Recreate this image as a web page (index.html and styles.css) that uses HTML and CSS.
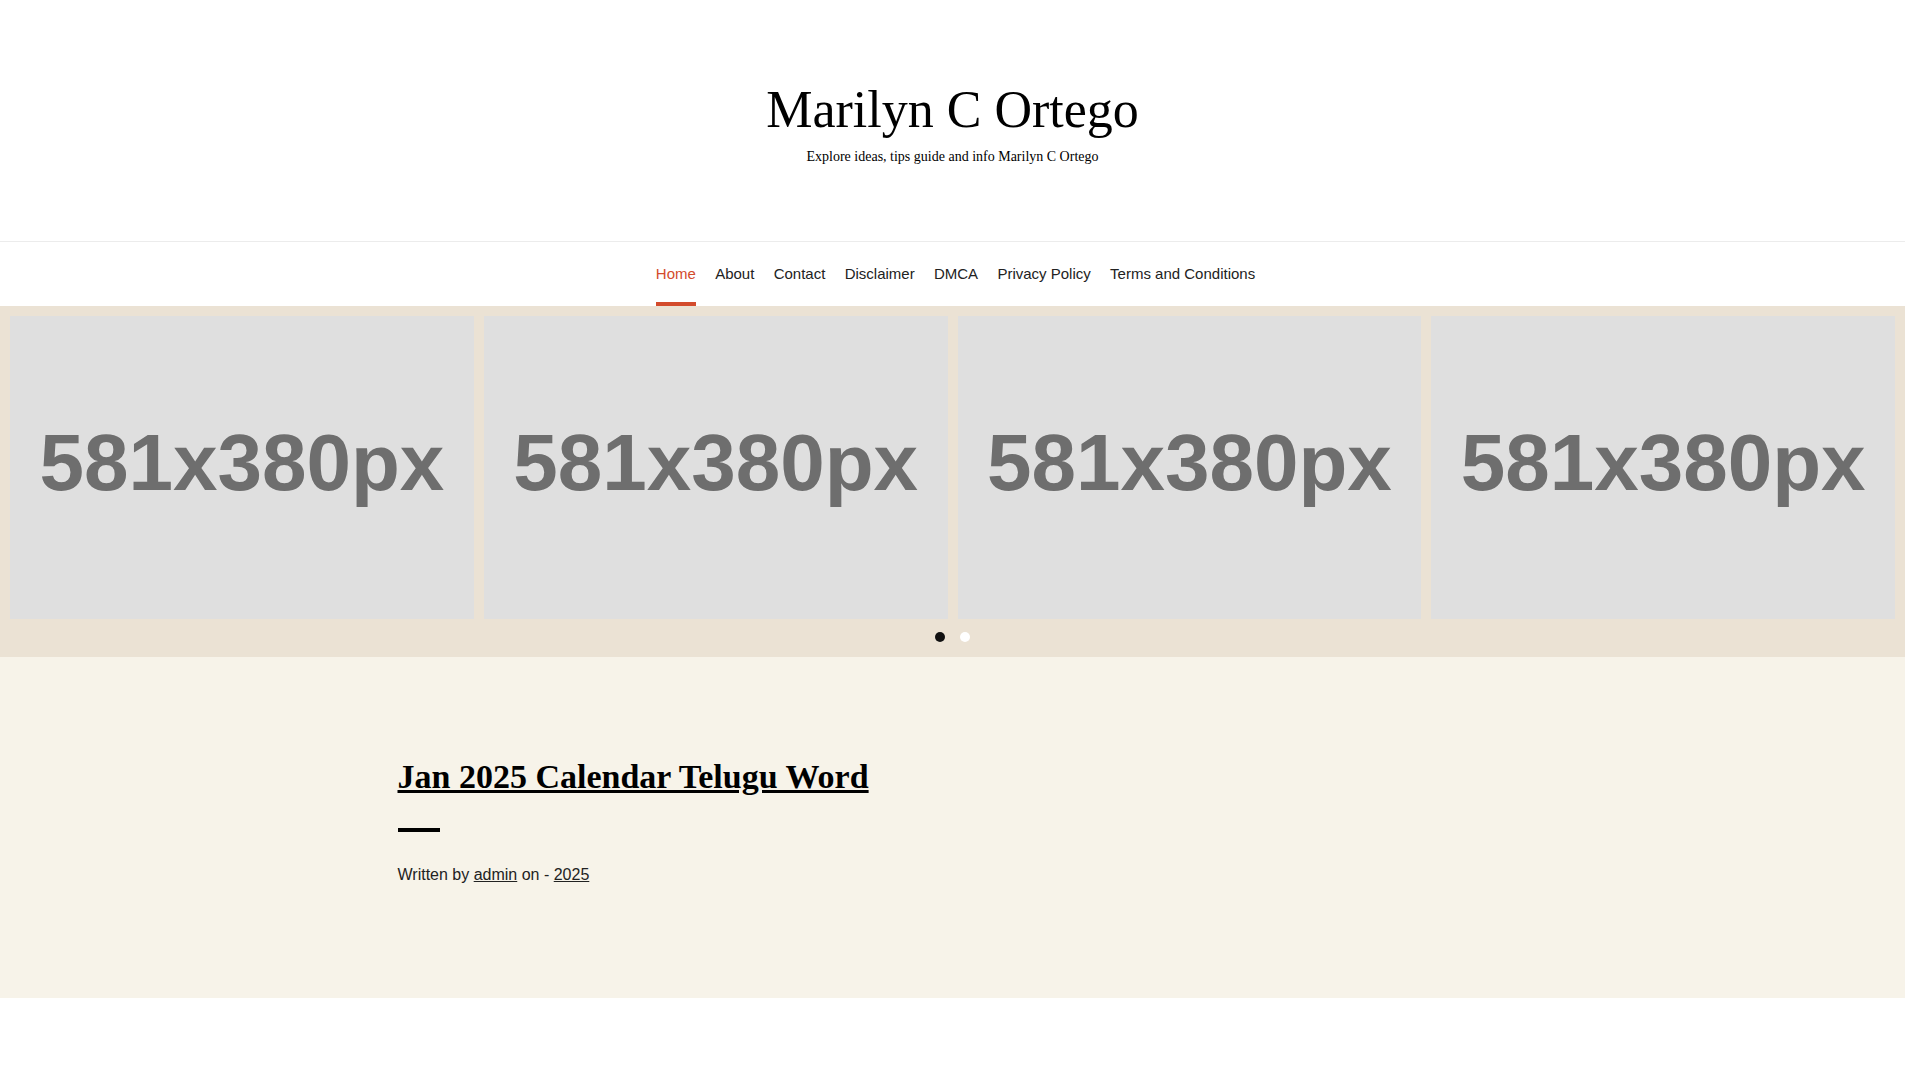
FILE: index.html
```html
<!DOCTYPE html>
<html lang="en">
<head>
<meta charset="utf-8">
<title>Marilyn C Ortego</title>
<link rel="stylesheet" href="styles.css">
</head>
<body>
<div class="page">
<header class="site-header">
  <h1 class="site-title">Marilyn C Ortego</h1>
  <p class="site-tagline">Explore ideas, tips guide and info Marilyn C Ortego</p>
</header>
<nav class="main-nav">
  <ul class="menu">
    <li><a class="menu-link active" href="#">Home</a></li>
    <li><a class="menu-link" href="#">About</a></li>
    <li><a class="menu-link" href="#">Contact</a></li>
    <li><a class="menu-link" href="#">Disclaimer</a></li>
    <li><a class="menu-link" href="#">DMCA</a></li>
    <li><a class="menu-link" href="#">Privacy Policy</a></li>
    <li><a class="menu-link" href="#">Terms and Conditions</a></li>
  </ul>
</nav>
<section class="slider">
  <div class="slides">
    <div class="slide"><span>581x380px</span></div>
    <div class="slide"><span>581x380px</span></div>
    <div class="slide"><span>581x380px</span></div>
    <div class="slide"><span>581x380px</span></div>
  </div>
  <div class="dots">
    <span class="dot active"></span>
    <span class="dot"></span>
  </div>
</section>
<section class="post-head">
  <div class="container">
    <h2 class="post-title"><a href="#">Jan 2025 Calendar Telugu Word</a></h2>
    <div class="title-bar"></div>
    <p class="post-meta">Written by <a href="#">admin</a> on - <a href="#">2025</a></p>
  </div>
</section>
<section class="post-body"></section>
</div>
</body>
</html>
```

FILE: styles.css
```css
html {
  overflow-y: scroll;
}
body {
  margin: 0;
  background: #fff;
  color: #222;
  font-family: "Liberation Sans", Arial, sans-serif;
}
.page {
  margin-right: 15px;
}
a {
  color: inherit;
}
.site-header {
  text-align: center;
  padding: 80px 0 74px;
  border-bottom: 1px solid #ececec;
  font-family: "Liberation Serif", "Times New Roman", serif;
  color: #000;
}
.site-title {
  margin: 0;
  font-size: 52px;
  line-height: 60px;
  font-weight: normal;
}
.site-tagline {
  margin: 7px 0 0;
  font-size: 14px;
  line-height: 20px;
}
.main-nav {
  height: 64px;
}
.menu {
  list-style: none;
  margin: 0;
  padding: 0 0 0 6px;
  display: flex;
  justify-content: center;
  gap: 19.3px;
}
.menu-link {
  position: relative;
  display: block;
  height: 64px;
  line-height: 64px;
  font-size: 15px;
  color: #222;
  text-decoration: none;
}
.menu-link.active {
  color: #d34b2c;
}
.menu-link.active::after {
  content: "";
  position: absolute;
  left: 0;
  right: 0;
  bottom: 0;
  height: 4px;
  background: #d34b2c;
}
.slider {
  background: #ebe2d4;
  padding: 10px 10px 15px;
}
.slides {
  display: grid;
  grid-template-columns: repeat(4, 1fr);
  gap: 10px;
}
.slide {
  aspect-ratio: 581 / 380;
  background: #dfdfdf;
  display: flex;
  align-items: center;
  justify-content: center;
  padding-bottom: 10px;
  box-sizing: border-box;
}
.slide span {
  font-size: 80px;
  font-weight: bold;
  color: #6e6e6e;
}
.dots {
  display: flex;
  justify-content: center;
  gap: 15px;
  margin-top: 13px;
}
.dot {
  width: 10px;
  height: 10px;
  border-radius: 50%;
  background: #fff;
}
.dot.active {
  background: #111;
}
.post-head {
  background: #f7f3e9;
  padding: 99.5px 0 111.5px;
}
.container {
  max-width: 1140px;
  margin: 0 auto;
  padding: 0 15px;
  box-sizing: border-box;
}
.post-title {
  margin: 0;
  font-family: "Liberation Serif", "Times New Roman", serif;
  font-size: 34px;
  line-height: 40px;
  font-weight: bold;
  color: #000;
}
.post-title a {
  color: #000;
  text-decoration: underline;
}
.title-bar {
  width: 42px;
  height: 4px;
  background: #000;
  margin-top: 31px;
}
.post-meta {
  margin: 31px 0 0;
  font-size: 16px;
  line-height: 24px;
  color: #222;
}
.post-body {
  height: 400px;
  background: #fff;
}
```
